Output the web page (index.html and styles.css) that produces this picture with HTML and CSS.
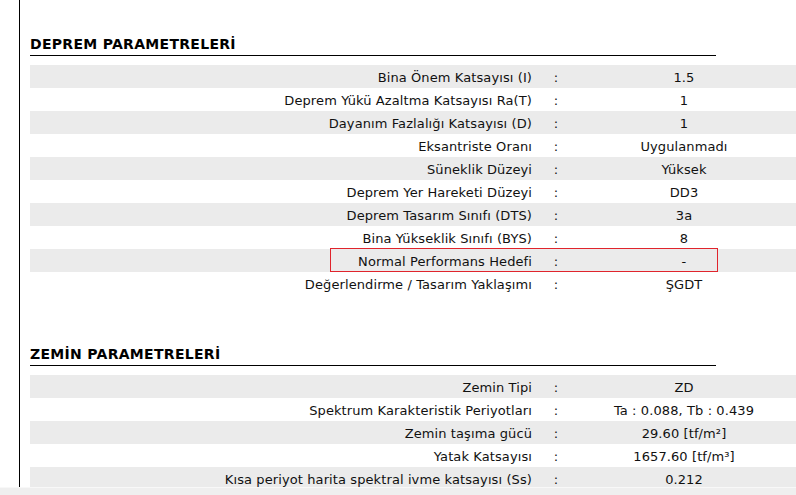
FILE: index.html
```html
<!DOCTYPE html>
<html lang="tr">
<head>
<meta charset="utf-8">
<title>Deprem Parametreleri</title>
<link rel="stylesheet" href="styles.css">
</head>
<body>
<div class="page">
  <section class="sect sect-deprem">
    <h2 class="sect-title">DEPREM PARAMETRELERİ</h2>
    <div class="params">
      <div class="row"><span class="lbl">Bina Önem Katsayısı (I)</span><span class="sep">:</span><span class="val">1.5</span></div>
      <div class="row"><span class="lbl">Deprem Yükü Azaltma Katsayısı Ra(T)</span><span class="sep">:</span><span class="val">1</span></div>
      <div class="row"><span class="lbl">Dayanım Fazlalığı Katsayısı (D)</span><span class="sep">:</span><span class="val">1</span></div>
      <div class="row"><span class="lbl">Eksantriste Oranı</span><span class="sep">:</span><span class="val">Uygulanmadı</span></div>
      <div class="row"><span class="lbl">Süneklik Düzeyi</span><span class="sep">:</span><span class="val">Yüksek</span></div>
      <div class="row"><span class="lbl">Deprem Yer Hareketi Düzeyi</span><span class="sep">:</span><span class="val">DD3</span></div>
      <div class="row"><span class="lbl">Deprem Tasarım Sınıfı (DTS)</span><span class="sep">:</span><span class="val">3a</span></div>
      <div class="row"><span class="lbl">Bina Yükseklik Sınıfı (BYS)</span><span class="sep">:</span><span class="val">8</span></div>
      <div class="row row-marked"><span class="lbl">Normal Performans Hedefi</span><span class="sep">:</span><span class="val">-</span><span class="mark"></span></div>
      <div class="row"><span class="lbl">Değerlendirme / Tasarım Yaklaşımı</span><span class="sep">:</span><span class="val">ŞGDT</span></div>
    </div>
  </section>
  <section class="sect sect-zemin">
    <h2 class="sect-title">ZEMİN PARAMETRELERİ</h2>
    <div class="params">
      <div class="row"><span class="lbl">Zemin Tipi</span><span class="sep">:</span><span class="val">ZD</span></div>
      <div class="row"><span class="lbl">Spektrum Karakteristik Periyotları</span><span class="sep">:</span><span class="val">Ta : 0.088, Tb : 0.439</span></div>
      <div class="row"><span class="lbl">Zemin taşıma gücü</span><span class="sep">:</span><span class="val">29.60 [tf/m²]</span></div>
      <div class="row"><span class="lbl">Yatak Katsayısı</span><span class="sep">:</span><span class="val">1657.60 [tf/m³]</span></div>
      <div class="row"><span class="lbl">Kısa periyot harita spektral ivme katsayısı (Ss)</span><span class="sep">:</span><span class="val">0.212</span></div>
    </div>
  </section>
</div>
<div class="hbar"></div>
</body>
</html>
```

FILE: styles.css
```css
html, body {
  margin: 0;
  padding: 0;
  background: #ffffff;
  overflow: hidden;
}

body {
  font-family: "DejaVu Sans", Verdana, sans-serif;
  font-size: 13px;
  color: #111111;
  width: 796px;
  height: 495px;
}

.page {
  margin-left: 19px;
  border-left: 1px solid #000000;
  padding-left: 10px;
  padding-top: 36px;
  height: 100vh;
  box-sizing: border-box;
}

.sect-zemin {
  margin-top: 51px;
}

.sect-title {
  margin: 0 0 9px 0;
  width: 686px;
  font-size: 14px;
  font-weight: bold;
  letter-spacing: 0.3px;
  line-height: 16px;
  padding-bottom: 3px;
  border-bottom: 1px solid #000000;
  color: #000000;
}

.params {
  display: flex;
  flex-direction: column;
}

.row {
  display: grid;
  grid-template-columns: 510px 32px 224px;
  height: 23px;
  padding-top: 2px;
  box-sizing: border-box;
  line-height: 21px;
  letter-spacing: 0.1px;
  white-space: nowrap;
  position: relative;
}

.row:nth-child(odd) {
  background: #ebebeb;
}

.lbl {
  text-align: right;
  padding-right: 8px;
}

.sep {
  text-align: center;
}

.val {
  text-align: center;
}

.mark {
  position: absolute;
  left: 300px;
  top: -1px;
  width: 388px;
  height: 24px;
  box-sizing: border-box;
  border: 1px solid #e0242c;
}

.hbar {
  position: fixed;
  left: 0;
  right: 0;
  bottom: 0;
  height: 7px;
  background: #efefef;
  border-top: 1px solid #f8f8f8;
}
```
